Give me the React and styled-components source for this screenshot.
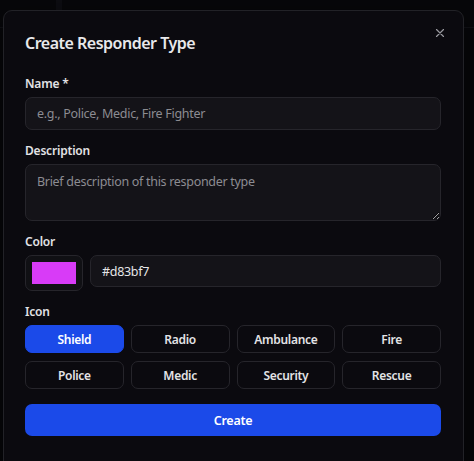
import React, { useState } from "react"
import styled, { createGlobalStyle } from "styled-components"

const GlobalStyle = createGlobalStyle`
  html, body {
    margin: 0;
    padding: 0;
    background: #07070a;
    font-family: "Noto Sans", "Open Sans", sans-serif;
  }
  * { box-sizing: border-box; }
`

const Page = styled.div`
  position: relative;
  width: 474px;
  height: 461px;
  overflow: hidden;
  background: #07070a;
`

const PageHeader = styled.div`
  height: 28px;
  border-bottom: 1px solid #111116;
  display: flex;
`

const PageTab = styled.div`
  width: 62px;
  border-right: 6px solid #0d0d12;
`

const Dialog = styled.div`
  position: absolute;
  left: 3px;
  top: 10px;
  width: 461px;
  height: 480px;
  background: #0b0a0f;
  border: 1px solid #222227;
  border-radius: 9px;
  padding: 22px 22px 0 21px;
  box-shadow: 0 10px 30px rgba(0, 0, 0, 0.6);
`

const Header = styled.div`
  display: flex;
  justify-content: space-between;
  align-items: flex-start;
  margin-bottom: 23px;
`

const Title = styled.h2`
  margin: 0;
  font-size: 16px;
  font-weight: 600;
  letter-spacing: -0.5px;
  color: #e8e8ea;
  line-height: 20px;
`

const CloseButton = styled.button`
  background: none;
  border: none;
  padding: 0;
  margin: -7px -6px 0 0;
  color: #9a9aa0;
  display: flex;
  cursor: pointer;
`

const Field = styled.div`
  display: flex;
  flex-direction: column;
  margin-bottom: 13px;
`

const Label = styled.label`
  font-size: 12px;
  font-weight: 600;
  letter-spacing: -0.2px;
  color: #e2e2e5;
  line-height: 16px;
  margin-bottom: 5px;
`

const TextInput = styled.input`
  height: 33px;
  width: 100%;
  background: #141318;
  border: 1px solid #26252b;
  border-radius: 7px;
  padding: 0 11px;
  font-family: inherit;
  font-size: 12.5px;
  letter-spacing: -0.3px;
  color: #e5e5e7;
  outline: none;
  &::placeholder { color: #8c8c92; }
`

const TextArea = styled.textarea`
  height: 57px;
  width: 100%;
  background: #141318;
  border: 1px solid #26252b;
  border-radius: 7px;
  padding: 8px 11px;
  font-family: inherit;
  font-size: 12.5px;
  letter-spacing: -0.3px;
  color: #e5e5e7;
  outline: none;
  resize: vertical;
  &::placeholder { color: #8c8c92; }
`

const ColorRow = styled.div`
  display: flex;
  gap: 7px;
  align-items: flex-start;
`

const Swatch = styled.div`
  width: 58px;
  height: 36px;
  flex-shrink: 0;
  border: 1px solid #26252b;
  border-radius: 7px;
  background: #101014;
  padding: 6px;
  display: flex;
`

const SwatchFill = styled.div`
  flex: 1;
  background: ${({ $color }) => $color};
`

const HexInput = styled(TextInput)`
  height: 32px;
`

const IconGrid = styled.div`
  display: grid;
  grid-template-columns: repeat(4, 1fr);
  gap: 8px 7px;
`

const IconButton = styled.button`
  height: 28px;
  border-radius: 7px;
  font-family: inherit;
  font-size: 12px;
  font-weight: 600;
  letter-spacing: -0.3px;
  cursor: pointer;
  background: ${({ $active }) => ($active ? "#1b4ae9" : "#0b0a0f")};
  color: ${({ $active }) => ($active ? "#ffffff" : "#e3e3e6")};
  border: 1px solid ${({ $active }) => ($active ? "#1b4ae9" : "#26252b")};
`

const SubmitButton = styled.button`
  width: 100%;
  height: 32px;
  margin-top: 2px;
  border: none;
  border-radius: 7px;
  background: #1b4ae9;
  color: #ffffff;
  font-family: inherit;
  font-size: 12.5px;
  font-weight: 600;
  letter-spacing: -0.3px;
  cursor: pointer;
`

const icons = ["Shield", "Radio", "Ambulance", "Fire", "Police", "Medic", "Security", "Rescue"]

const App = () => {
  const [icon, setIcon] = useState("Shield")
  const color = "#d83bf7"

  return (
    <>
      <GlobalStyle />
      <Page>
        <PageHeader>
          <PageTab />
        </PageHeader>
        <Dialog>
          <Header>
            <Title>Create Responder Type</Title>
            <CloseButton aria-label="Close">
              <svg width="14" height="14" viewBox="0 0 24 24" fill="none" stroke="currentColor" strokeWidth="2" strokeLinecap="round">
                <path d="M18 6 6 18M6 6l12 12" />
              </svg>
            </CloseButton>
          </Header>
          <Field>
            <Label>Name *</Label>
            <TextInput placeholder="e.g., Police, Medic, Fire Fighter" />
          </Field>
          <Field>
            <Label>Description</Label>
            <TextArea placeholder="Brief description of this responder type" />
          </Field>
          <Field>
            <Label>Color</Label>
            <ColorRow>
              <Swatch>
                <SwatchFill $color={color} />
              </Swatch>
              <HexInput defaultValue={color} />
            </ColorRow>
          </Field>
          <Field>
            <Label>Icon</Label>
            <IconGrid>
              {icons.map((name) => (
                <IconButton key={name} $active={icon === name} onClick={() => setIcon(name)}>
                  {name}
                </IconButton>
              ))}
            </IconGrid>
          </Field>
          <SubmitButton>Create</SubmitButton>
        </Dialog>
      </Page>
    </>
  )
}

export default App
